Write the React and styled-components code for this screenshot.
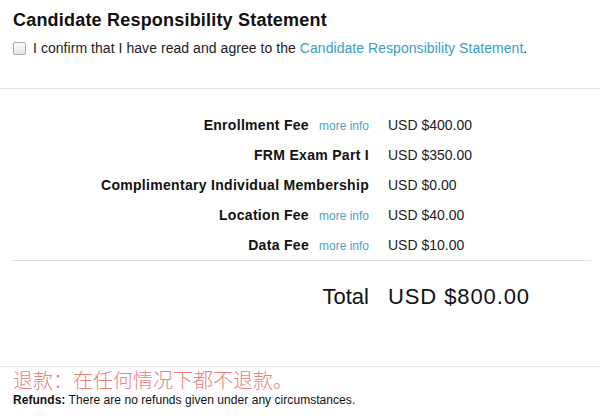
import React from "react";
import styled, { createGlobalStyle } from "styled-components";

const Global = createGlobalStyle`
  html, body { margin: 0; padding: 0; background: #fff; }
  body { font-family: "Liberation Sans", Arial, sans-serif; color: #111; }
`;

const Page = styled.div`
  width: 600px;
  height: 420px;
  overflow: hidden;
  background: #fff;
`;

const Statement = styled.section`
  padding: 10px 13px 0;
  height: 89px;
  box-sizing: border-box;
  border-bottom: 1px solid #e6e6e6;
`;

const Title = styled.h2`
  margin: 0;
  font-size: 18px;
  line-height: 20px;
  font-weight: bold;
  color: #111;
  letter-spacing: 0.2px;
`;

const Confirm = styled.label`
  display: flex;
  align-items: center;
  gap: 7px;
  margin-top: 8px;
  font-size: 14px;
  line-height: 20px;
  color: #222;
  letter-spacing: 0.05px;
`;

const Box = styled.span`
  width: 11px;
  height: 11px;
  border: 1px solid #a9a9a9;
  border-radius: 2px;
  background: linear-gradient(#fdfdfd, #e4e4e4);
  flex: none;
  margin-top: 1px;
`;

const Link = styled.a`
  color: #3a9dc6;
  text-decoration: none;
`;

const Fees = styled.div`
  margin: 21px 9px 0 12px;
  border-bottom: 1px solid #e2e2e2;
`;

const Row = styled.div`
  display: grid;
  grid-template-columns: 357px 1fr;
  column-gap: 19px;
  height: 30px;
  line-height: 30px;
  font-size: 14px;
`;

const Label = styled.div`
  display: flex;
  justify-content: flex-end;
  align-items: baseline;
  gap: 10px;
  font-weight: bold;
  color: #111;
  letter-spacing: 0.3px;
`;

const More = styled.a`
  font-size: 12px;
  font-weight: normal;
  letter-spacing: 0;
  color: #4ba3cc;
  text-decoration: none;
`;

const Value = styled.div`
  color: #222;
`;

const TotalRow = styled(Row)`
  margin: 21px 9px 0 12px;
  font-size: 22px;
  line-height: 30px;
  height: 30px;
`;

const TotalLabel = styled.div`
  text-align: right;
  color: #111;
`;

const TotalValue = styled.div`
  color: #111;
  letter-spacing: 0.9px;
`;

const Footer = styled.footer`
  margin-top: 54px;
  border-top: 1px solid #e8e8e8;
  padding: 3px 13px 0;
`;

const Notice = styled.div`
  font-family: "Noto Sans CJK SC", sans-serif;
  font-weight: 300;
  font-size: 20px;
  line-height: 20px;
  color: #ee7f7f;
`;

const Refund = styled.div`
  margin-top: 3px;
  font-size: 12px;
  line-height: 14px;
  color: #111;
  letter-spacing: 0.05px;
  b { font-weight: bold; }
`;

const fees = [
  { label: "Enrollment Fee", more: true, value: "USD $400.00" },
  { label: "FRM Exam Part I", more: false, value: "USD $350.00" },
  { label: "Complimentary Individual Membership", more: false, value: "USD $0.00" },
  { label: "Location Fee", more: true, value: "USD $40.00" },
  { label: "Data Fee", more: true, value: "USD $10.00" },
];

export default function App() {
  return (
    <Page>
      <Global />
      <Statement>
        <Title>Candidate Responsibility Statement</Title>
        <Confirm>
          <Box />
          <span>
            I confirm that I have read and agree to the{" "}
            <Link href="#">Candidate Responsibility Statement</Link>.
          </span>
        </Confirm>
      </Statement>
      <Fees>
        {fees.map((f) => (
          <Row key={f.label}>
            <Label>
              <span>{f.label}</span>
              {f.more && <More href="#">more info</More>}
            </Label>
            <Value>{f.value}</Value>
          </Row>
        ))}
      </Fees>
      <TotalRow>
        <TotalLabel>Total</TotalLabel>
        <TotalValue>USD $800.00</TotalValue>
      </TotalRow>
      <Footer>
        <Notice>退款：在任何情况下都不退款。</Notice>
        <Refund>
          <b>Refunds:</b> There are no refunds given under any circumstances.
        </Refund>
      </Footer>
    </Page>
  );
}
